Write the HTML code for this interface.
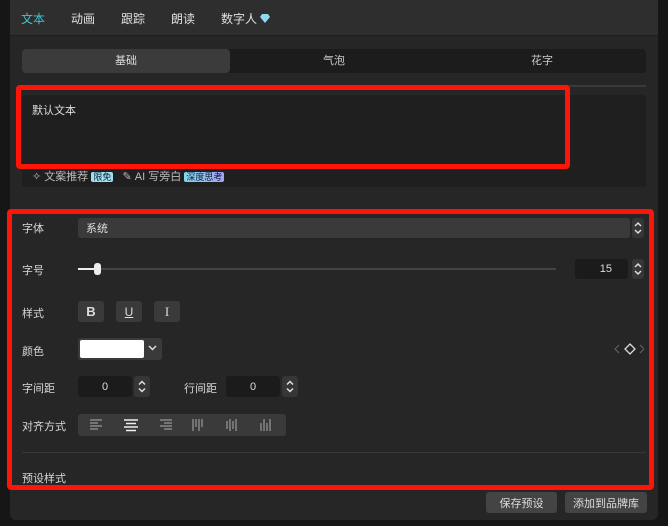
<!DOCTYPE html>
<html><head><meta charset="utf-8"><style>
*{margin:0;padding:0;box-sizing:border-box}
body{width:668px;height:526px;background:#161616;font-family:"Liberation Sans","Noto Sans CJK SC",sans-serif;font-size:11px;color:#ddd;position:relative;overflow:hidden}
.a{position:absolute}
.panel{left:10px;top:0;width:648px;height:520px;background:#262626;border-radius:0 0 6px 6px}
.top{left:10px;top:0;width:648px;height:36px;background:#2e2e2e;border-bottom:1px solid #1e1e1e}
.tab{top:10px;font-size:12px;color:#e0e0e0}
.lbl{font-size:11px;color:#d8d8d8}
.btn{background:#3a3a3a;border-radius:3px}
.fc{display:flex;align-items:center;justify-content:center}
.spin{background:#363636;border-radius:3px}
.red{border:5px solid #ff1408;border-radius:4px}
.num{background:#1b1b1b;border-radius:3px}
</style></head><body>
<div class="a panel"></div>
<div class="a top"></div>
<div class="a tab" style="left:21px;color:#3ec6d8">文本</div>
<div class="a tab" style="left:71px">动画</div>
<div class="a tab" style="left:121px">跟踪</div>
<div class="a tab" style="left:171px">朗读</div>
<div class="a tab" style="left:221px">数字人 <svg width="10" height="9" viewBox="0 0 10 9" style="vertical-align:0"><path d="M2 0H8L10 3L5 9L0 3Z" fill="#8fd8f0"/></svg></div>

<div class="a" style="left:22px;top:49px;width:624px;height:24px;background:#1c1c1c;border-radius:4px"></div>
<div class="a" style="left:22px;top:49px;width:208px;height:24px;background:#3b3b3b;border-radius:4px;text-align:center;line-height:24px">基础</div>
<div class="a" style="left:230px;top:49px;width:208px;height:24px;text-align:center;line-height:24px;color:#ccc">气泡</div>
<div class="a" style="left:438px;top:49px;width:208px;height:24px;text-align:center;line-height:24px;color:#ccc">花字</div>
<div class="a" style="left:22px;top:85px;width:624px;height:2px;background:#3a3a3a"></div>
<div class="a" style="left:22px;top:95px;width:624px;height:92px;background:#1f1f1f;border-radius:3px"></div>
<div class="a" style="left:32px;top:102px">默认文本</div>
<div class="a" style="left:32px;top:168px;color:#bbb">✧ 文案推荐 <span style="background:#9fe0f0;color:#123;font-size:9px;padding:0 2px;border-radius:2px">限免</span>&nbsp;&nbsp;&nbsp;✎ AI 写旁白 <span style="background:linear-gradient(90deg,#7fd8f0,#a8a0f0);color:#123;font-size:9px;padding:0 2px;border-radius:2px">深度思考</span></div>
<div class="a red" style="left:16px;top:85px;width:554px;height:84px"></div>

<svg width="0" height="0" style="position:absolute"><defs><symbol id="sp" viewBox="0 0 12 20"><path d="M3 8L6 5L9 8M3 12L6 15L9 12" fill="none" stroke="#ddd" stroke-width="1.5"/></symbol></defs></svg>

<div class="a lbl" style="left:22px;top:220px">字体</div>
<div class="a btn" style="left:78px;top:218px;width:552px;height:20px;padding:2px 0 0 8px;color:#ddd">系统</div>
<svg class="a spin" style="left:632px;top:218px" width="12" height="20"><use href="#sp"/></svg>

<div class="a lbl" style="left:22px;top:262px">字号</div>
<div class="a" style="left:78px;top:268px;width:478px;height:2px;background:#444"></div>
<div class="a" style="left:78px;top:268px;width:20px;height:2px;background:#eee"></div>
<div class="a" style="left:94px;top:263px;width:7px;height:12px;background:#eee;border-radius:3px"></div>
<div class="a num fc" style="left:575px;top:259px;width:53px;height:20px;justify-content:flex-end;padding-right:16px">15</div>
<svg class="a spin" style="left:632px;top:259px" width="12" height="20"><use href="#sp"/></svg>

<div class="a lbl" style="left:22px;top:305px">样式</div>
<div class="a btn fc" style="left:78px;top:301px;width:26px;height:21px;font-size:13px;font-weight:bold">B</div>
<div class="a btn fc" style="left:116px;top:301px;width:26px;height:21px;font-size:12px;text-decoration:underline">U</div>
<div class="a btn fc" style="left:154px;top:301px;width:26px;height:21px;font-size:13px;font-family:'Liberation Serif',serif">I</div>

<div class="a lbl" style="left:22px;top:343px">颜色</div>
<div class="a btn" style="left:78px;top:338px;width:84px;height:22px"></div>
<div class="a" style="left:80px;top:340px;width:64px;height:18px;background:#fff;border-radius:2px"></div>
<svg class="a" style="left:148px;top:345px" width="9" height="6"><path d="M1 1L4.5 4.5L8 1" fill="none" stroke="#ddd" stroke-width="1.5"/></svg>
<svg class="a" style="left:614px;top:342px" width="30" height="14"><path d="M5 3L1 7L5 11" fill="none" stroke="#666" stroke-width="1"/><path d="M16 2L21 7L16 12L11 7Z" fill="none" stroke="#ddd" stroke-width="1.3"/><path d="M26 3L30 7L26 11" fill="none" stroke="#666" stroke-width="1"/></svg>

<div class="a lbl" style="left:22px;top:380px">字间距</div>
<div class="a num fc" style="left:78px;top:376px;width:54px;height:21px;padding-right:0">0</div>
<svg class="a spin" style="left:134px;top:376px" width="16" height="21" viewBox="-2 0 16 21"><use href="#sp" width="12" height="21"/></svg>
<div class="a lbl" style="left:184px;top:380px">行间距</div>
<div class="a num fc" style="left:226px;top:376px;width:54px;height:21px">0</div>
<svg class="a spin" style="left:282px;top:376px" width="16" height="21" viewBox="-2 0 16 21"><use href="#sp" width="12" height="21"/></svg>

<div class="a lbl" style="left:22px;top:418px">对齐方式</div>
<div class="a btn" style="left:78px;top:414px;width:208px;height:22px"></div>
<svg class="a" style="left:78px;top:414px" width="208" height="22">
<g stroke="#999" stroke-width="1.2"><path d="M12 6H24M12 9H20M12 12H24M12 15H20"/></g>
<g stroke="#eee" stroke-width="1.5"><path d="M46 6H60M48 9.5H58M46 13H60M48 16.5H58"/></g>
<g stroke="#999" stroke-width="1.2"><path d="M82 6H94M86 9H94M82 12H94M86 15H94"/>
<path d="M115 5V17M118 5V13M121 5V17M124 5V13"/>
<path d="M149 7V15M152 5V17M155 7V15M158 5V17"/>
<path d="M183 9V17M186 5V17M189 9V17M192 5V17"/></g></svg>

<div class="a" style="left:22px;top:452px;width:624px;height:1px;background:#383838"></div>
<div class="a lbl" style="left:22px;top:470px">预设样式</div>
<div class="a red" style="left:7px;top:209px;width:647px;height:281px"></div>

<div class="a btn fc" style="left:486px;top:492px;width:71px;height:21px;background:#444">保存预设</div>
<div class="a btn fc" style="left:565px;top:492px;width:82px;height:21px;background:#444">添加到品牌库</div>
</body></html>
